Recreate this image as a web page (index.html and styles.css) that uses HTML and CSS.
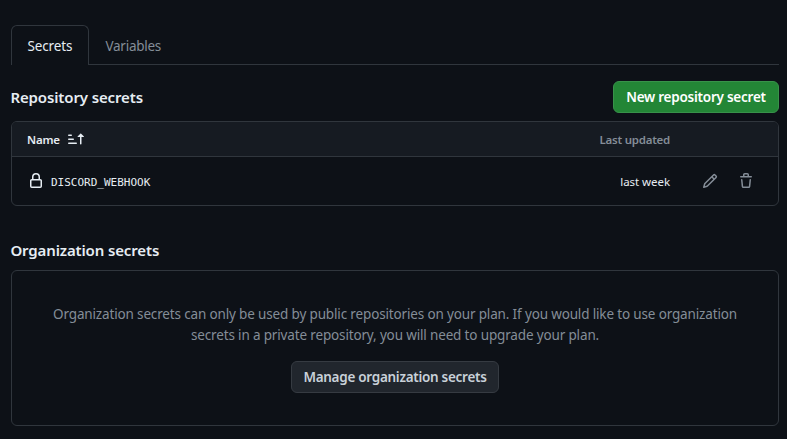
FILE: index.html
```html
<!DOCTYPE html>
<html lang="en">
<head>
<meta charset="utf-8">
<title>Secrets</title>
<link rel="stylesheet" href="styles.css">
</head>
<body>
<main class="page">
  <nav class="tabs">
    <a class="tab tab-active"><span class="t-secrets">Secrets</span></a>
    <a class="tab"><span class="t-variables">Variables</span></a>
  </nav>
  <header class="section-head">
    <h2 class="t-repo">Repository secrets</h2>
    <button class="btn btn-primary"><span class="t-new">New repository secret</span></button>
  </header>
  <section class="table">
    <div class="row row-head">
      <span class="name t-name">Name</span>
      <svg class="icon sort" viewBox="0 0 16 16"><path d="m12.927 2.573 3 3A.25.25 0 0 1 15.75 6H13.5v6.75a.75.75 0 0 1-1.5 0V6H9.75a.25.25 0 0 1-.177-.427l3-3a.25.25 0 0 1 .354 0ZM0 12.25a.75.75 0 0 1 .75-.75h7.5a.75.75 0 0 1 0 1.5H.75a.75.75 0 0 1-.75-.75Zm0-4a.75.75 0 0 1 .75-.75h4.5a.75.75 0 0 1 0 1.5H.75a.75.75 0 0 1-.75-.75Zm0-4a.75.75 0 0 1 .75-.75h2.5a.75.75 0 0 1 0 1.5H.75a.75.75 0 0 1-.75-.75Z"/></svg>
      <span class="updated muted t-updated">Last updated</span>
    </div>
    <div class="row row-body">
      <svg class="icon lock" viewBox="0 0 16 16"><path d="M4 4a4 4 0 0 1 8 0v2h.25c.966 0 1.75.784 1.75 1.75v5.5A1.75 1.75 0 0 1 12.25 15h-8.5A1.75 1.75 0 0 1 2 13.25v-5.5C2 6.784 2.784 6 3.75 6H4Zm8.25 3.5h-8.5a.25.25 0 0 0-.25.25v5.5c0 .138.112.25.25.25h8.5a.25.25 0 0 0 .25-.25v-5.5a.25.25 0 0 0-.25-.25ZM10.5 6V4a2.5 2.5 0 1 0-5 0v2Z"/></svg>
      <code class="secret">DISCORD_WEBHOOK</code>
      <span class="updated t-week">last week</span>
      <svg class="icon pencil" viewBox="0 0 16 16"><path d="M11.013 1.427a1.75 1.75 0 0 1 2.474 0l1.086 1.086a1.75 1.75 0 0 1 0 2.474l-8.61 8.61c-.21.21-.47.364-.756.445l-3.251.93a.75.75 0 0 1-.927-.928l.929-3.25c.081-.286.235-.547.445-.758l8.61-8.61Zm.176 4.823L9.75 4.81l-6.286 6.287a.253.253 0 0 0-.064.108l-.558 1.953 1.953-.558a.253.253 0 0 0 .108-.064Zm1.238-3.763a.25.25 0 0 0-.354 0L10.811 3.75l1.439 1.44 1.263-1.263a.25.25 0 0 0 0-.354Z"/></svg>
      <svg class="icon trash" viewBox="0 0 16 16"><path d="M11 1.75V3h2.25a.75.75 0 0 1 0 1.5H2.75a.75.75 0 0 1 0-1.5H5V1.75C5 .784 5.784 0 6.75 0h2.5C10.216 0 11 .784 11 1.75ZM4.496 6.675l.66 6.6a.25.25 0 0 0 .249.225h5.19a.25.25 0 0 0 .249-.225l.66-6.6a.75.75 0 0 1 1.492.149l-.66 6.6A1.748 1.748 0 0 1 10.595 15h-5.19a1.75 1.75 0 0 1-1.741-1.575l-.66-6.6a.75.75 0 1 1 1.492-.15ZM6.5 1.75V3h3V1.75a.25.25 0 0 0-.25-.25h-2.5a.25.25 0 0 0-.25.25Z"/></svg>
    </div>
  </section>
  <h2 class="org-title t-org">Organization secrets</h2>
  <section class="blank">
    <p class="muted"><span class="t-line1">Organization secrets can only be used by public repositories on your plan. If you would like to use organization</span><br><span class="t-line2">secrets in a private repository, you will need to upgrade your plan.</span></p>
    <button class="btn btn-plain"><span class="t-manage">Manage organization secrets</span></button>
  </section>
</main>
</body>
</html>
```
FILE: styles.css
```css
* { box-sizing: border-box; }
body {
  margin: 0;
  height: 439px;
  overflow: hidden;
  background: #0d1117;
  color: #e6edf3;
  font: 13.5px/21px "Noto Sans", "Open Sans", sans-serif;
}
.page { padding: 25px 8px 0 11px; }
h2 { margin: 0; font-size: 15px; line-height: 24px; font-weight: 600; text-indent: -0.6px; }
span, h2 { white-space: nowrap; }
.muted { color: #848d97; }
.tabs { display: flex; height: 40px; border-bottom: 1px solid #30363d; }
.tab {
  height: 40px;
  padding: 10px 15.5px 0;
  border: 1px solid transparent;
  border-bottom: 0;
  color: #848d97;
}
.tab-active {
  width: 78px;
  background: #0d1117;
  border-color: #30363d;
  border-radius: 6px 6px 0 0;
  color: #e6edf3;
}
.section-head {
  display: flex;
  justify-content: space-between;
  align-items: center;
  height: 32px;
  margin: 16px 0 8px;
}
.btn {
  height: 32px;
  padding: 0;
  border: 1px solid #363b42;
  border-radius: 6px;
  font: 600 13.5px/20px "Noto Sans", "Open Sans", sans-serif;
}
.btn-primary { width: 166px; background: #238636; border-color: #38924a; color: #fff; }
.btn-plain { width: 208px; background: #21262d; color: #c9d1d9; }
.table { height: 85px; border: 1px solid #30363d; border-radius: 6px; overflow: hidden; }
.row { display: flex; align-items: center; padding-left: 15px; font-size: 11.5px; }
.row-head { height: 35px; background: #161b22; border-bottom: 1px solid #30363d; font-weight: 600; }
.row-body { height: 48px; padding-top: 2px; }
.icon { width: 16px; height: 16px; fill: currentColor; flex: none; }
.sort { margin-left: 8px; }
.updated { margin-left: auto; }
.row-head .updated { margin-right: 108px; }
.lock { margin: 0 7px 2px 1px; }
.secret { padding-top: 1px; font: 11px/16px "DejaVu Sans Mono", monospace; }
.row-body .updated { padding-bottom: 1px; }
.pencil { margin: 0 20px 2px 32px; color: #848d97; }
.trash { margin: 0 24px 2px 0; color: #848d97; }
.org-title { margin-top: 32px; }
.blank {
  height: 156px;
  margin-top: 8px;
  padding-top: 33px;
  border: 1px solid #30363d;
  border-radius: 6px;
  text-align: center;
}
.blank p { margin: 0 0 15px; }
.t-secrets { letter-spacing: -0.15px; }
.t-variables { letter-spacing: -0.27px; }
.t-repo, .t-org { letter-spacing: -0.13px; }
.t-new { letter-spacing: -0.24px; }
.t-name { letter-spacing: -0.2px; }
.t-updated { letter-spacing: -0.25px; }
.t-week { letter-spacing: -0.06px; }
.t-line1, .t-line2 { letter-spacing: -0.152px; }
.t-manage { letter-spacing: -0.28px; }
```
